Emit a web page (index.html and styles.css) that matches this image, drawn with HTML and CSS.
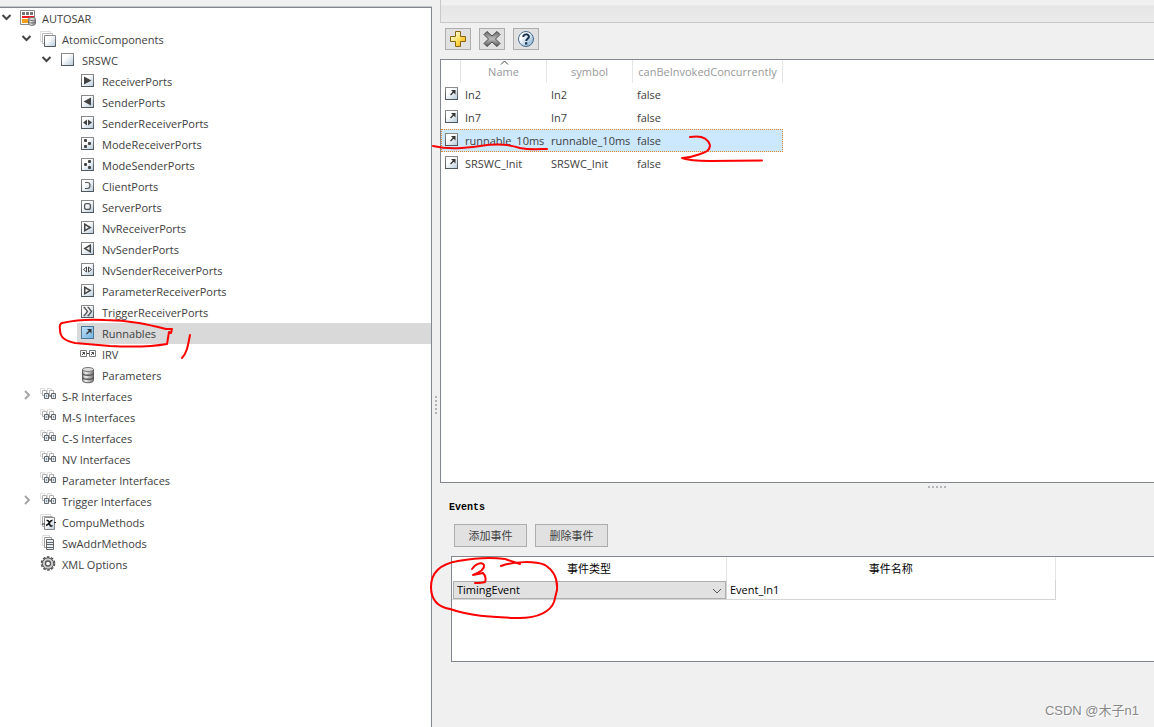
FILE: index.html
```html
<!DOCTYPE html>
<html lang="zh-CN">
<head>
<meta charset="utf-8">
<meta name="viewport" content="width=device-width, initial-scale=1">
<title>AUTOSAR Dictionary</title>
<link rel="stylesheet" href="styles.css">
</head>
<body>
<svg class="defs" aria-hidden="true">
  <defs>
    <linearGradient id="paper" x1="0" y1="0" x2="1" y2="1"><stop offset=".35" stop-color="#fff"/><stop offset="1" stop-color="#b5cadb"/></linearGradient>
    <linearGradient id="blue" x1="0" y1="0" x2="1" y2="1"><stop offset="0" stop-color="#c5e2f7"/><stop offset="1" stop-color="#6fb1e2"/></linearGradient>
    <linearGradient id="edge" x1="0" y1="0" x2="0" y2="1"><stop offset="0" stop-color="#8b8b8b"/><stop offset="1" stop-color="#4f565c"/></linearGradient>
    <linearGradient id="gold" x1="0" y1="0" x2="1" y2="1"><stop offset=".2" stop-color="#fffbd0"/><stop offset=".6" stop-color="#ffd84a"/><stop offset="1" stop-color="#e89c10"/></linearGradient>
    <linearGradient id="steel" x1="0" y1="0" x2="0" y2="1"><stop offset="0" stop-color="#666"/><stop offset=".5" stop-color="#bbb"/><stop offset="1" stop-color="#555"/></linearGradient>
    <linearGradient id="metal" x1="0" y1="0" x2="1" y2="0"><stop offset="0" stop-color="#999"/><stop offset=".3" stop-color="#eee"/><stop offset="1" stop-color="#777"/></linearGradient>
    <linearGradient id="help" x1="0" y1="0" x2="1" y2="1"><stop offset=".3" stop-color="#fff"/><stop offset="1" stop-color="#78a6cc"/></linearGradient>
  </defs>
  <symbol id="box" viewBox="0 0 16 17"><rect x="1.500" y="1.500" width="12" height="12" fill="url(#paper)" stroke="url(#edge)"/></symbol>
  <symbol id="root" viewBox="0 0 16 17"><path d="M.5.500h14v14H.5z" fill="#fff" stroke="#888"/><path d="M2 2h3v3H2zM6 2h3v3H6zM10 2h3v3h-3z" fill="#777"/><path d="M2 6h12v2H2z" fill="#ed1c24"/><path d="M2 9h7v4H2z" fill="#f5a01c"/><path d="M8.500 9v4.500c0 2.500 7 2.500 7 0V9z" fill="url(#metal)" stroke="#777"/><ellipse cx="12" cy="9" rx="3.500" ry="1.500" fill="#ddd" stroke="#777"/><path d="M8.500 11.500c0 2 7 2 7 0" fill="none" stroke="#666"/></symbol>
  <symbol id="stack" viewBox="0 0 16 17"><path d="M.5.500h10v10H.5z" fill="#fff" stroke="#ddd"/><path d="M2.500 2.500h10v10h-10z" fill="#fff" stroke="#bbb"/><path d="M4.500 4.500h11v11h-11z" fill="url(#paper)" stroke="url(#edge)"/></symbol>
  <symbol id="recv" viewBox="0 0 16 17"><use href="#box"/><path d="M4 3.500l7.500 4-7.500 4z" fill="#444"/></symbol>
  <symbol id="send" viewBox="0 0 16 17"><use href="#box"/><path d="M11 3.500L3.500 7.500l7.500 4z" fill="#444"/></symbol>
  <symbol id="both" viewBox="0 0 16 17"><use href="#box"/><path d="M7 4.500L3 7.500l4 3zM8 4.500l4 3-4 3z" fill="#444"/></symbol>
  <symbol id="moder" viewBox="0 0 16 17"><use href="#box"/><g fill="#444"><rect x="4" y="3" width="3" height="3" rx="1"/><rect x="8" y="6" width="3" height="3" rx="1"/><rect x="4" y="9" width="3" height="3" rx="1"/></g></symbol>
  <symbol id="modes" viewBox="0 0 16 17"><use href="#box"/><g fill="#444"><rect x="8" y="3" width="3" height="3" rx="1"/><rect x="4" y="6" width="3" height="3" rx="1"/><rect x="8" y="9" width="3" height="3" rx="1"/></g></symbol>
  <symbol id="client" viewBox="0 0 16 17"><use href="#box"/><path d="M5 4.500h2.500q2.500 0 2.500 3t-2.500 3H5" fill="none" stroke="#555" stroke-width="1.200"/></symbol>
  <symbol id="server" viewBox="0 0 16 17"><use href="#box"/><rect x="4.600" y="4.600" width="5.800" height="5.800" rx="2" fill="none" stroke="#555" stroke-width="1.300"/></symbol>
  <symbol id="nvr" viewBox="0 0 16 17"><use href="#box"/><path d="M4.700 4.200l5.500 3.300-5.500 3.300z" fill="#eee" stroke="#444" stroke-width="1.500"/></symbol>
  <symbol id="nvs" viewBox="0 0 16 17"><use href="#box"/><path d="M10.300 4.200L4.800 7.500l5.500 3.300z" fill="#eee" stroke="#444" stroke-width="1.500"/></symbol>
  <symbol id="nvb" viewBox="0 0 16 17"><use href="#box"/><path d="M6.500 5L3.500 7.500l3 2.500zM8.500 5l3 2.500-3 2.500z" fill="#fff" stroke="#444"/></symbol>
  <symbol id="trig" viewBox="0 0 16 17"><use href="#box"/><path d="M3.500 3.500h1l3 4-3 4h-1M7.500 3.500h1l3 4-3 4h-1" fill="none" stroke="#555" stroke-width="1.300"/></symbol>
  <symbol id="arrow" viewBox="0 0 16 17"><path d="M6.500 9l3.500-3.500" stroke="#333" stroke-width="1.300"/><path d="M7 4h4.500v4.500z" fill="#333"/></symbol>
  <symbol id="runsel" viewBox="0 0 16 17"><rect x="1.500" y="1.500" width="12" height="12" fill="url(#blue)" stroke="#4f7696"/><use href="#arrow"/></symbol>
  <symbol id="run" viewBox="0 0 16 17"><use href="#box"/><use href="#arrow"/></symbol>
  <symbol id="irv" viewBox="0 0 16 17"><path d="M.5 4.500h6v6h-6zM9.500 4.500h6v6h-6z" fill="#fff" stroke="#777"/><path d="M7 7.500h2M2 9l2.500-2.500M11 9l2.500-2.500M2.500 6.500h2v2M11.500 6.500h2v2" fill="none" stroke="#444"/></symbol>
  <symbol id="db" viewBox="0 0 16 17"><path d="M2.500 2.500v11c0 3 11 3 11 0v-11z" fill="url(#metal)" stroke="#666"/><ellipse cx="8" cy="2.500" rx="5.500" ry="2" fill="#ddd" stroke="#777"/><path d="M2.500 6c0 3 11 3 11 0M2.500 10c0 3 11 3 11 0" fill="none" stroke="#555" stroke-width="1.300"/></symbol>
  <symbol id="iface" viewBox="0 0 16 17"><path d="M.5.500h4v5h-4zM7.500.500h4v5h-4z" fill="#fff" stroke="#ddd"/><path d="M2.500 2.500h4v5h-4zM9.500 2.500h4v5h-4z" fill="#fff" stroke="#b0b0b0"/><path d="M4.500 5.500h4v5h-4zM11.500 5.500h4v5h-4z" fill="#dbe8f2" stroke="#666"/><path d="M9 8h2M6 8h1M13 8h1" stroke="#444"/></symbol>
  <symbol id="compu" viewBox="0 0 16 17"><path d="M.5.500h10v10H.5z" fill="#fff" stroke="#ddd"/><path d="M2.500 2.500h10v10h-10z" fill="#fff" stroke="#aaa"/><path d="M4.500 3.500h10v12h-10z" fill="url(#paper)" stroke="#888"/><path d="M2 10h3M14 8.500h2" stroke="#222"/><path d="M6.500 6.500q2-.5 2.500 1.500l1 3q.5 2 2.500.5M12.500 6.500q-1.500-.5-3 2t-3.500 3" fill="none" stroke="#111" stroke-width="1.500"/></symbol>
  <symbol id="sheets" viewBox="0 0 16 17"><path d="M2.500.500h7v10h-7z" fill="#fff" stroke="#ddd"/><path d="M4.500 2.500h7v10h-7z" fill="#fff" stroke="#999"/><path d="M6.500 4.500h7v10h-7z" fill="#e4eef6" stroke="#666"/><path d="M7 7.500h6M7 9.500h6M7 12.500h6" stroke="#666"/></symbol>
  <symbol id="gear" viewBox="0 0 16 17"><circle cx="8" cy="7.500" r="6.500" fill="none" stroke="#555" stroke-width="1.600" stroke-dasharray="2.600 1.500"/><circle cx="8" cy="7.500" r="5.600" fill="#ccc" stroke="#555"/><circle cx="8" cy="7.500" r="2.500" fill="#fff" stroke="#555" stroke-width="1.300"/></symbol>
  <symbol id="down" viewBox="0 0 12 12"><path d="M2.500 4l4 4 4-4" fill="none" stroke="#444" stroke-width="2"/></symbol>
  <symbol id="right" viewBox="0 0 12 12"><path d="M5 2l4 4-4 4" fill="none" stroke="#a6a6a6" stroke-width="2"/></symbol>
</svg>

<div class="app">
  <nav class="sidebar" aria-label="AUTOSAR">
    <ul class="tree">
      <li><div class="row"><button class="toggle" aria-label="AUTOSAR"><svg class="chev"><use href="#down"/></svg></button><a class="label" href="#"><svg class="ico"><use href="#root"/></svg>AUTOSAR</a></div>
        <ul>
          <li><div class="row"><button class="toggle" aria-label="AtomicComponents"><svg class="chev"><use href="#down"/></svg></button><a class="label" href="#"><svg class="ico"><use href="#stack"/></svg>AtomicComponents</a></div>
            <ul>
              <li><div class="row"><button class="toggle" aria-label="SRSWC"><svg class="chev"><use href="#down"/></svg></button><a class="label" href="#"><svg class="ico"><use href="#box"/></svg>SRSWC</a></div>
                <ul>
                  <li class="row"><a class="label" href="#"><svg class="ico"><use href="#recv"/></svg>ReceiverPorts</a></li>
                  <li class="row"><a class="label" href="#"><svg class="ico"><use href="#send"/></svg>SenderPorts</a></li>
                  <li class="row"><a class="label" href="#"><svg class="ico"><use href="#both"/></svg>SenderReceiverPorts</a></li>
                  <li class="row"><a class="label" href="#"><svg class="ico"><use href="#moder"/></svg>ModeReceiverPorts</a></li>
                  <li class="row"><a class="label" href="#"><svg class="ico"><use href="#modes"/></svg>ModeSenderPorts</a></li>
                  <li class="row"><a class="label" href="#"><svg class="ico"><use href="#client"/></svg>ClientPorts</a></li>
                  <li class="row"><a class="label" href="#"><svg class="ico"><use href="#server"/></svg>ServerPorts</a></li>
                  <li class="row"><a class="label" href="#"><svg class="ico"><use href="#nvr"/></svg>NvReceiverPorts</a></li>
                  <li class="row"><a class="label" href="#"><svg class="ico"><use href="#nvs"/></svg>NvSenderPorts</a></li>
                  <li class="row"><a class="label" href="#"><svg class="ico"><use href="#nvb"/></svg>NvSenderReceiverPorts</a></li>
                  <li class="row"><a class="label" href="#"><svg class="ico"><use href="#nvr"/></svg>ParameterReceiverPorts</a></li>
                  <li class="row"><a class="label" href="#"><svg class="ico"><use href="#trig"/></svg>TriggerReceiverPorts</a></li>
                  <li class="row"><a class="label selected" href="#" aria-current="true"><svg class="ico"><use href="#runsel"/></svg>Runnables</a></li>
                  <li class="row"><a class="label" href="#"><svg class="ico"><use href="#irv"/></svg>IRV</a></li>
                  <li class="row"><a class="label" href="#"><svg class="ico"><use href="#db"/></svg>Parameters</a></li>
                </ul>
              </li>
            </ul>
          </li>
          <li class="row"><button class="toggle" aria-label="S-R Interfaces"><svg class="chev"><use href="#right"/></svg></button><a class="label" href="#"><svg class="ico"><use href="#iface"/></svg>S-R Interfaces</a></li>
          <li class="row"><a class="label" href="#"><svg class="ico"><use href="#iface"/></svg>M-S Interfaces</a></li>
          <li class="row"><a class="label" href="#"><svg class="ico"><use href="#iface"/></svg>C-S Interfaces</a></li>
          <li class="row"><a class="label" href="#"><svg class="ico"><use href="#iface"/></svg>NV Interfaces</a></li>
          <li class="row"><a class="label" href="#"><svg class="ico"><use href="#iface"/></svg>Parameter Interfaces</a></li>
          <li class="row"><button class="toggle" aria-label="Trigger Interfaces"><svg class="chev"><use href="#right"/></svg></button><a class="label" href="#"><svg class="ico"><use href="#iface"/></svg>Trigger Interfaces</a></li>
          <li class="row"><a class="label" href="#"><svg class="ico"><use href="#compu"/></svg>CompuMethods</a></li>
          <li class="row"><a class="label" href="#"><svg class="ico"><use href="#sheets"/></svg>SwAddrMethods</a></li>
          <li class="row"><a class="label" href="#"><svg class="ico"><use href="#gear"/></svg>XML Options</a></li>
        </ul>
      </li>
    </ul>
  </nav>

  <div class="splitter"><span class="grip grip-v"></span></div>

  <main class="main">
    <div class="strip"></div>
    <div class="toolbar">
      <button class="tool" aria-label="Add"><svg width="20" height="20" viewBox="0 0 20 20"><path d="M7.500 2.500h5v5h5v5h-5v5h-5v-5h-5v-5h5z" fill="url(#gold)" stroke="#8a6310"/></svg></button>
      <button class="tool" aria-label="Delete"><svg width="20" height="20" viewBox="0 0 20 20"><path d="M5 2.500l5 4.500 5-4.500 3 3-4.500 4.500 4.500 4.500-3 3-5-4.500-5 4.500-3-3L6.500 10 2 5.500z" fill="url(#steel)" stroke="#4a4a4a"/></svg></button>
      <button class="tool" aria-label="Help"><svg width="20" height="20" viewBox="0 0 20 20"><circle cx="10" cy="10" r="7.500" fill="url(#help)" stroke="#46698c"/><path d="M7.300 8c0-3.500 5.600-3.400 5.600-.3 0 2-2.700 2-2.700 4.300" fill="none" stroke="#17344f" stroke-width="2"/><path d="M9 13.300h2.300v2.200H9z" fill="#17344f"/></svg></button>
    </div>

    <section class="pane list-pane">
      <table class="runnables">
        <colgroup><col class="c-icon"><col class="c-name"><col class="c-name"><col class="c-can"></colgroup>
        <thead><tr><th></th><th><svg class="sort" viewBox="0 0 9 5"><path d="M1 4.500L4.500 1 8 4.500" fill="none" stroke="#444"/></svg>Name</th><th>symbol</th><th>canBeInvokedConcurrently</th></tr></thead>
        <tbody>
          <tr><td><svg class="ico"><use href="#run"/></svg></td><td>In2</td><td>In2</td><td>false</td></tr>
          <tr><td><svg class="ico"><use href="#run"/></svg></td><td>In7</td><td>In7</td><td>false</td></tr>
          <tr class="picked"><td><svg class="ico"><use href="#run"/></svg></td><td>runnable_10ms</td><td>runnable_10ms</td><td>false</td></tr>
          <tr><td><svg class="ico"><use href="#run"/></svg></td><td>SRSWC_Init</td><td>SRSWC_Init</td><td>false</td></tr>
        </tbody>
      </table>
    </section>
    <div class="hsplit"><span class="grip grip-h"></span></div>

    <section class="events">
      <h2 class="title">Events</h2>
      <div class="actions"><button class="action">添加事件</button><button class="action">删除事件</button></div>
      <div class="pane event-pane">
        <table class="event-table">
          <thead><tr><th>事件类型</th><th>事件名称</th></tr></thead>
          <tbody><tr>
            <td><div class="combo"><select aria-label="事件类型"><option>TimingEvent</option></select><svg class="caret" viewBox="0 0 10 6"><path d="M1 1l4 4 4-4" fill="none" stroke="#555"/></svg></div></td>
            <td>Event_In1</td>
          </tr></tbody>
        </table>
      </div>
      <p class="credit">CSDN @木子n1</p>
    </section>
  </main>

  <svg class="ink" width="800" height="700" viewBox="0 0 800 700" aria-hidden="true">
    <path d="M62 323C75 320 88 319 105 320C130 320 150 325 166 329L172 329 171 333 169 332 167 344C150 347 130 347 110 346L75 343C66 341 60 338 60 330Q59 324 62 323"/>
    <path d="M190 335C188 345 187 353 182 358"/>
    <path d="M433 146C450 150 465 148 480 146C500 143 510 145 520 148C530 150 540 149 547 149"/>
    <path d="M690 137C702 135 708 139 710 145C710 152 703 153 697 155C692 157 685 158 682 158C690 161 700 161 710 161L762 160.500"/>
    <path d="M472 569C476 563 482 562 484 565C485 569 478 573 473 575L483 573C486 576 486 580 485 582C482 583 478 583 475 583"/>
    <path d="M520 564L505 559C490 557 475 558 458 561C440 564 431 573 431 587C431 600 438 607 450 609C470 616 490 617 515 618C540 619 551 610 554 602L557 590C558 577 553 570 545 565C535 561 515 561 501 566"/>
  </svg>
</div>
</body>
</html>
```
FILE: styles.css
```css
* { box-sizing: border-box; }
body {
  margin: 0;
  background: #f0f0f0;
  color: #404040;
  font: 11px/16px "Open Sans", "Noto Sans CJK SC", sans-serif;
}
button, select { font: inherit; color: inherit; margin: 0; }
.defs { position: absolute; width: 0; height: 0; }
.app { position: relative; display: flex; min-height: 100vh; }

/* Tree */
.sidebar {
  flex: 0 0 432px;
  margin-top: 7px;
  background: #fff;
  border-top: 1px solid #828790;
  border-right: 1px solid #828790;
  box-shadow: 0 -1px #c8c8c8;
}
.tree, .tree ul { list-style: none; margin: 0; padding: 0; }
.tree ul { padding-left: 20px; }
.row { display: flex; height: 21px; padding-left: 17px; }
.toggle {
  display: flex;
  align-items: flex-start;
  width: 17px;
  margin-left: -17px;
  padding: 3px 0 0;
  border: 0;
  background: none;
}
.chev { display: block; width: 12px; height: 12px; }
.label {
  flex: 1;
  display: flex;
  align-items: center;
  gap: 6px;
  padding-left: 3px;
  color: inherit;
  text-decoration: none;
}
.label.selected { background: #d9d9d9; }
.ico { display: block; flex: none; width: 16px; height: 17px; }

/* Splitters */
.splitter { flex: 0 0 8px; display: flex; justify-content: center; padding-top: 396px; }
.grip-v { width: 2px; height: 18px; background: repeating-linear-gradient(#b4b4b4 0 2px, transparent 2px 4px); }
.hsplit { display: flex; height: 13px; padding: 3px 0 0 68%; }
.grip-h { width: 20px; height: 2px; margin-left: 2px; background: repeating-linear-gradient(90deg, #b4b4b4 0 2px, transparent 2px 4px); }

/* Right side */
.main { flex: 1; min-width: 0; display: flex; flex-direction: column; }
.strip {
  height: 23px;
  border-left: 1px solid #c8c8c8;
  border-bottom: 1px solid #c8c8c8;
  background: linear-gradient(#f0f0f0 20%, #e6e6e6 30%, #ebebeb);
}
.toolbar { display: flex; gap: 8px; padding: 5px 5px 9px; }
.tool {
  width: 26px;
  height: 22px;
  padding: 0;
  border: 1px solid #adadad;
  background: #e1e1e1;
}
.tool svg { display: block; margin: auto; }
.pane { background: #fff; border: 1px solid #828790; border-right: 0; }
.list-pane { flex: 1; }
table { border-collapse: separate; border-spacing: 0; table-layout: fixed; }
th { font-weight: 400; text-align: center; }
td { text-align: left; }
th, td { padding: 0 4px; white-space: nowrap; }
.runnables { width: 342px; }
.c-icon { width: 20px; }
.c-name { width: 86px; }
.c-can { width: 150px; }
.runnables th { position: relative; height: 23px; padding: 0; color: #999; border-right: 1px solid #e5e5e5; }
.runnables td { height: 23px; }
.runnables td:first-child { padding: 0 0 0 3px; }
.sort { position: absolute; top: 0; left: 50%; width: 9px; height: 5px; margin-left: -4px; }
.picked { background: #cce8ff; outline: 1px dotted #e8842a; outline-offset: -1px; }

/* Events */
.events { padding-left: 9px; }
.title { margin: 4px 0 9px; font: bold 10px/15px "Liberation Mono", monospace; color: #000; }
.actions { display: flex; gap: 8px; padding-left: 5px; }
.action {
  width: 73px;
  height: 23px;
  padding: 0;
  border: 1px solid #adadad;
  background: #e1e1e1;
  line-height: 20px;
}
.event-pane { height: 106px; margin: 9px 0 0 2px; color: #000; }
.event-table { width: 86%; }
.event-table th { height: 23px; border-right: 1px solid #e5e5e5; }
.event-table td { height: 20px; border-right: 1px solid #d5d5d5; border-bottom: 1px solid #d5d5d5; }
.event-table th:first-child { width: 275px; }
.event-table td:first-child { padding: 0 0 0 1px; }
.event-table td:last-child { padding-left: 3px; }
.combo { position: relative; }
.combo select {
  display: block;
  width: 100%;
  height: 18px;
  padding: 0 3px;
  border: 1px solid #adadad;
  border-radius: 0;
  background: #e1e1e1;
  appearance: none;
}
.caret { position: absolute; right: 4px; top: 7px; width: 10px; height: 6px; }
.credit {
  margin: 39px 15px 6px;
  text-align: right;
  font: 13px/20px "Liberation Sans", "Noto Sans CJK SC", sans-serif;
  color: #888;
  text-shadow: 1px 1px #fff;
}

/* Handwritten marks over the window */
.ink { position: absolute; left: 0; top: 0; pointer-events: none; fill: none; stroke: #f00; stroke-width: 2; stroke-linecap: round; stroke-linejoin: round; }
```
